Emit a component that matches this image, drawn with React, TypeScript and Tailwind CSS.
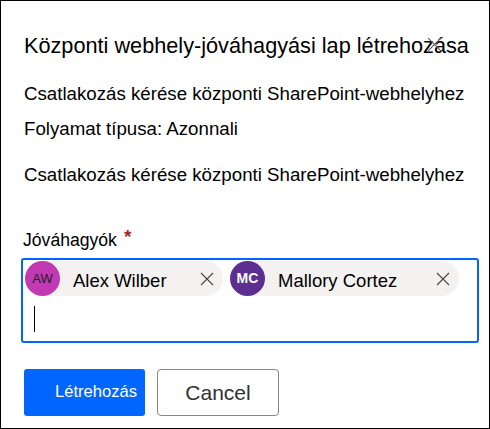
const font = { fontFamily: '"Liberation Sans", Arial, sans-serif' }

function XIcon({ className }: { className: string }) {
  return (
    <svg viewBox="0 0 14 14" className={className} fill="none" stroke="currentColor" strokeWidth="1.1">
      <path d="M1 1 L13 13 M13 1 L1 13" />
    </svg>
  )
}

const people = [
  { initials: 'AW', name: 'Alex Wilber', bg: 'bg-[#c239b3]', text: 'text-[#201f1e] font-normal text-[13px]', width: 'w-[198px]' },
  { initials: 'MC', name: 'Mallory Cortez', bg: 'bg-[#5c2e91]', text: 'text-white font-bold text-[14px]', width: 'w-[229px]' },
] as const

export default function App() {
  return (
    <div
      className="relative w-[490px] h-[429px] bg-white border border-black flex flex-col text-black"
      style={font}
    >
      {/* Header */}
      <h1 className="mt-[31px] ml-[23px] text-[21.7px] leading-[28px] font-normal whitespace-nowrap">
        Központi webhely-jóváhagyási lap létrehozása
      </h1>
      <button className="absolute left-[426px] top-[36px] w-[15px] h-[15px] text-[#605e5c]">
        <XIcon className="w-[15px] h-[15px]" />
      </button>

      {/* Description */}
      <p className="mt-[22px] ml-[23px] text-[18.7px] leading-[24px] whitespace-nowrap">
        Csatlakozás kérése központi SharePoint-webhelyhez
      </p>
      <p className="mt-[11px] ml-[23px] text-[18.7px] leading-[24px] whitespace-nowrap">
        Folyamat típusa: Azonnali
      </p>
      <p className="mt-[22px] ml-[23px] text-[18.7px] leading-[24px] whitespace-nowrap">
        Csatlakozás kérése központi SharePoint-webhelyhez
      </p>

      {/* People picker */}
      <label className="mt-[41px] ml-[22px] text-[17.6px] leading-[24px] flex items-start">
        Jóváhagyók
        <span className="ml-[7px] text-[#a4262c] text-[19px] leading-[18px] font-bold">*</span>
      </label>
      <div className="mt-[6px] ml-[20px] w-[458px] h-[85px] border-2 border-[#0066ff] rounded-[3px] pt-[1px] pl-[2px] flex flex-col">
        <div className="flex gap-[7px]">
          {people.map((p) => (
            <div
              key={p.initials}
              className={`${p.width} h-[35px] rounded-full bg-[#f3f2f1] flex items-center justify-between`}
            >
              <div className="flex items-center">
                <span
                  className={`w-[35px] h-[35px] rounded-full ${p.bg} ${p.text} flex items-center justify-center`}
                >
                  {p.initials}
                </span>
                <span className="ml-[13px] pt-[5px] text-[18.5px] leading-[24px]">{p.name}</span>
              </div>
              <XIcon className="mr-[9px] w-[14px] h-[14px] text-[#484644]" />
            </div>
          ))}
        </div>
        <div className="mt-[10px] ml-[9px] w-px h-[26px] bg-black" />
      </div>

      {/* Footer */}
      <div className="mt-[26px] ml-[23px] flex gap-[12px]">
        <button className="w-[121px] h-[47px] rounded-[3px] bg-[#0066ff] text-white text-[16.6px] flex items-center pl-[31px]">
          Létrehozás
        </button>
        <button className="w-[122px] h-[47px] rounded-[4px] border border-[#8a8886] bg-white text-[#323130] text-[21px] flex items-center justify-center">
          Cancel
        </button>
      </div>
    </div>
  )
}
